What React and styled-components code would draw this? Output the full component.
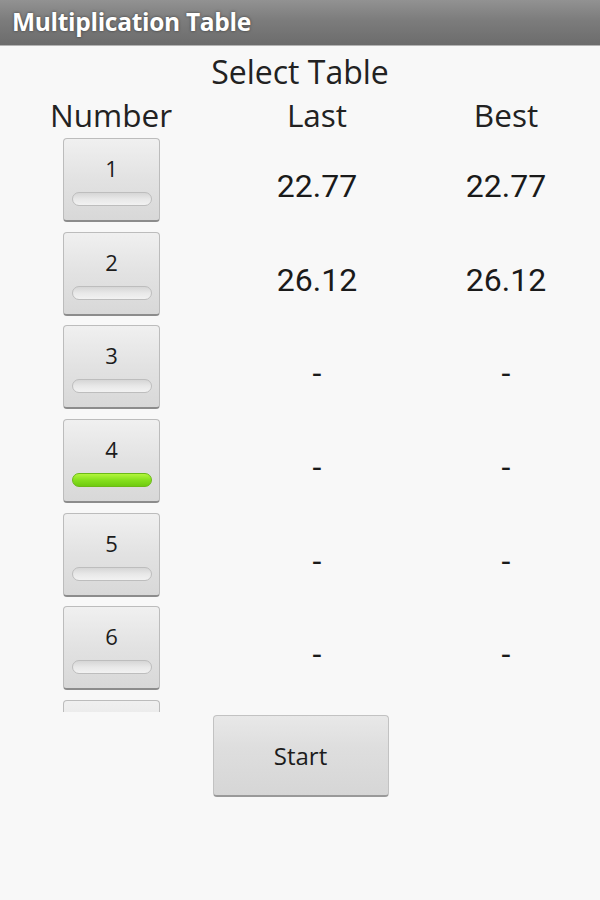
import React from "react";
import styled, { createGlobalStyle } from "styled-components";

// row 7 sits below the fold of the scroll list; only its button top peeks out
const rows = [
  { n: 1, last: "22.77", best: "22.77" },
  { n: 2, last: "26.12", best: "26.12" },
  { n: 3, last: "-", best: "-" },
  { n: 4, last: "-", best: "-", on: true },
  { n: 5, last: "-", best: "-" },
  { n: 6, last: "-", best: "-" },
  { n: 7, last: "", best: "" },
];

const GlobalStyle = createGlobalStyle`
  html, body {
    margin: 0;
    padding: 0;
    background: #f8f8f8;
    font-family: "Open Sans", "Noto Sans", sans-serif;
  }
`;

const Screen = styled.div`
  width: 600px;
  height: 900px;
  background: #f8f8f8;
  display: flex;
  flex-direction: column;
  overflow: hidden;
`;

const TitleBar = styled.div`
  height: 46px;
  box-sizing: border-box;
  display: flex;
  align-items: center;
  padding: 0 0 2px 12px;
  background: linear-gradient(#929292, #7c7c7c 45%, #6c6c6c);
  border-bottom: 1px solid #b4b4b4;
  color: #fff;
  font-weight: 700;
  font-size: 24.5px;
  letter-spacing: -0.3px;
  text-shadow: 0 0 3px rgba(0, 0, 0, 0.55);
`;

const Heading = styled.div`
  text-align: center;
  font-size: 32px;
  color: #222;
  margin-top: 8px;
  line-height: 36px;
`;

const Grid = styled.div`
  display: grid;
  grid-template-columns: 222px 190px 1fr;
  align-items: center;
`;

const HeadCell = styled.div`
  text-align: center;
  font-size: 31.5px;
  color: #222;
  line-height: 36px;
  margin-top: 7px;
`;

const List = styled.div`
  height: 574px;
  margin-top: 5px;
  overflow: hidden;
`;

const Row = styled(Grid)`
  height: 84px;
  margin-bottom: 9.7px;
`;

const Value = styled.div`
  text-align: center;
  font-family: Roboto, "Open Sans", sans-serif;
  font-size: 32px;
  color: #1a1a1a;
  padding-top: 12px;
`;

const Toggle = styled.div`
  justify-self: center;
  margin-left: 1px;
  width: 97px;
  height: 84px;
  box-sizing: border-box;
  border-radius: 4px;
  border: 1px solid #bcbcbc;
  border-bottom: 2px solid #8c8c8c;
  background: linear-gradient(#f0f0f0, #e2e2e2 50%, #d8d8d8);
  display: flex;
  flex-direction: column;
  align-items: center;
  padding-top: 15px;
`;

const Num = styled.div`
  font-size: 22px;
  color: #1c1c1c;
  line-height: 28px;
`;

const Bar = styled.div`
  margin-top: 10px;
  width: 80px;
  height: 14px;
  border-radius: 7px;
  box-sizing: border-box;
  border: 1px solid ${(p) => (p.on ? "#6cba17" : "#bdbdbd")};
  background: ${(p) =>
    p.on
      ? "linear-gradient(#b2f53c, #86e01e 50%, #6fcb10)"
      : "linear-gradient(#d6d6d6, #e8e8e8 50%, #f2f2f2)"};
`;

const Footer = styled.div`
  display: flex;
  justify-content: center;
  padding-top: 3px;
`;

const StartButton = styled.button`
  width: 176px;
  height: 82px;
  margin-left: 1px;
  border-radius: 4px;
  border: 1px solid #c2c2c2;
  border-bottom: 2px solid #999;
  background: linear-gradient(#e8e8e8, #dedede 40%, #d6d6d6);
  font-family: "Open Sans", "Noto Sans", sans-serif;
  font-size: 24px;
  color: #1c1c1c;
  padding: 0;
`;

export default function App() {
  return (
    <Screen>
      <GlobalStyle />
      <TitleBar>Multiplication Table</TitleBar>
      <Heading>Select Table</Heading>
      <Grid>
        <HeadCell>Number</HeadCell>
        <HeadCell>Last</HeadCell>
        <HeadCell>Best</HeadCell>
      </Grid>
      <List>
        {rows.map((r) => (
          <Row key={r.n}>
            <Toggle>
              <Num>{r.n}</Num>
              <Bar on={r.on ? 1 : 0} />
            </Toggle>
            <Value>{r.last}</Value>
            <Value>{r.best}</Value>
          </Row>
        ))}
      </List>
      <Footer>
        <StartButton>Start</StartButton>
      </Footer>
    </Screen>
  );
}
